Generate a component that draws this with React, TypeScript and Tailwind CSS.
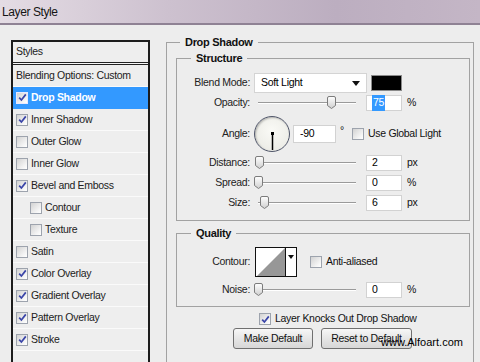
import React from 'react'

type StyleRow = { label: string; check: boolean | null; selected?: boolean; indent?: boolean }

const rows: StyleRow[] = [
  { label: 'Blending Options: Custom', check: null },
  { label: 'Drop Shadow', check: true, selected: true },
  { label: 'Inner Shadow', check: true },
  { label: 'Outer Glow', check: false },
  { label: 'Inner Glow', check: false },
  { label: 'Bevel and Emboss', check: true },
  { label: 'Contour', check: false, indent: true },
  { label: 'Texture', check: false, indent: true },
  { label: 'Satin', check: false },
  { label: 'Color Overlay', check: true },
  { label: 'Gradient Overlay', check: true },
  { label: 'Pattern Overlay', check: true },
  { label: 'Stroke', check: true },
  { label: '', check: null },
]

function Check({ checked, light }: { checked: boolean; light?: boolean }) {
  return (
    <span
      className={`flex h-[12px] w-[12px] shrink-0 items-center justify-center border ${
        light ? 'border-[#e8e8ff]' : 'border-[#9da3ad]'
      } bg-[linear-gradient(135deg,#d2d2d2,#f4f4f4_70%,#ffffff)]`}
    >
      {checked && (
        <svg width="9" height="9" viewBox="0 0 9 9">
          <path d="M1.2 4.6 L3.4 7 L7.8 1.4" fill="none" stroke="#3a45a8" strokeWidth="1.7" />
        </svg>
      )}
    </span>
  )
}

function Thumb() {
  return (
    <svg width="9" height="13" viewBox="0 0 9 13">
      <defs>
        <linearGradient id="tg" x1="0" y1="0" x2="0" y2="1">
          <stop offset="0" stopColor="#ffffff" />
          <stop offset="1" stopColor="#cfcfcf" />
        </linearGradient>
      </defs>
      <path
        d="M2 0.5 H7 Q8.5 0.5 8.5 2 V9.5 L4.5 12.5 L0.5 9.5 V2 Q0.5 0.5 2 0.5Z"
        fill="url(#tg)"
        stroke="#7c7c7c"
      />
    </svg>
  )
}

function Slider({ pos }: { pos: number }) {
  return (
    <div className="relative h-[16px] w-[106px]">
      <div className="absolute left-[4px] right-[4px] top-[7px] h-[2px] border-t border-[#9a9a9a] border-b border-b-white" />
      <div className="absolute top-[1px]" style={{ left: pos }}>
        <Thumb />
      </div>
    </div>
  )
}

function NumBox({ value, highlight }: { value: string; highlight?: boolean }) {
  return (
    <div className="flex h-[16px] w-[36px] items-center border border-[#d2d2d2] bg-white pl-[5px] text-black">
      {highlight ? <span className="bg-[#3399ff] px-[1px] text-white">{value}</span> : value}
    </div>
  )
}

function Label({ text }: { text: string }) {
  return <div className="w-[73px] shrink-0 text-right text-[#222]">{text}</div>
}

function SliderRow({ label, pos, value, unit, highlight, className = '' }: {
  label: string
  pos: number
  value: string
  unit: string
  highlight?: boolean
  className?: string
}) {
  return (
    <div className={`flex h-[16px] items-center ${className}`}>
      <Label text={label} />
      <div className="ml-[4px]">
        <Slider pos={pos} />
      </div>
      <div className="ml-[6px]">
        <NumBox value={value} highlight={highlight} />
      </div>
      <span className="ml-[5px]">{unit}</span>
    </div>
  )
}

export default function App() {
  return (
    <div className="relative h-[362px] w-[480px] overflow-hidden bg-[#ededed] font-['Liberation_Sans',Arial,sans-serif] text-[10.5px] tracking-[-0.3px] text-[#111]">
      {/* title bar */}
      <div className="flex h-[25px] items-center border-b-2 border-[#8f8294] bg-[linear-gradient(90deg,#e4dce4,#cdc1cf_35%,#bcaec0_70%,#c4b6c6)] pl-[2px] text-[12px] tracking-[-0.4px] text-[#151515]">
        Layer Style
      </div>

      <div className="flex h-[335px] items-start">
        {/* styles list */}
        <div className="ml-[11px] mt-[15px] h-[330px] w-[139px] shrink-0 border-2 border-b-0 border-[#1c1c1c] bg-[#eeeeee]">
          <div className="flex h-[20px] items-center pl-[3px] text-[#222]">Styles</div>
          <div className="h-[3px] border-y border-[#222] bg-[#f6f6f6]" />
          {rows.map((r, i) => (
            <div
              key={i}
              className={`flex h-[22px] items-center border-b ${
                r.selected
                  ? 'border-[#3399ff] bg-[#3399ff] font-bold text-white'
                  : 'border-[#fafafa] text-[#222]'
              } ${r.indent ? 'pl-[17px]' : 'pl-[3px]'}`}
            >
              {r.check !== null && (
                <span className="mr-[3px]">
                  <Check checked={r.check} light={r.selected} />
                </span>
              )}
              {r.label}
            </div>
          ))}
        </div>

        {/* drop shadow panel */}
        <fieldset className="ml-[16px] mt-[10px] h-[330px] w-[308px] shrink-0 border border-[#a2a2a2] pl-[9px] pr-[3px]">
          <legend className="ml-[4px] px-[5px] text-[11px] leading-[14px] font-bold text-[#111]">Drop Shadow</legend>

          <fieldset className="mt-[2px] w-[294px] border border-[#a2a2a2] pb-[9px]">
            <legend className="ml-[14px] px-[5px] text-[11px] leading-[14px] font-bold text-[#111]">Structure</legend>

            <div className="mt-[8px] flex h-[20px] items-center">
              <Label text="Blend Mode:" />
              <div className="ml-[4px] flex h-[20px] w-[113px] items-center justify-between border border-[#d4d4d4] bg-white pl-[6px] pr-[6px] text-black">
                <span>Soft Light</span>
                <svg width="8" height="5" viewBox="0 0 8 5">
                  <path d="M0 0 H8 L4 5Z" fill="#111" />
                </svg>
              </div>
              <div className="ml-[4px] h-[16px] w-[31px] border border-[#8a8a8a] bg-black" />
            </div>

            <SliderRow className="mt-[2px]" label="Opacity:" pos={73} value="75" unit="%" highlight />

            <div className="mt-[5px] flex h-[36px] items-center">
              <Label text="Angle:" />
              <div className="ml-[4px] flex h-[36px] w-[36px] items-start justify-center rounded-full border-[1.5px] border-[#50566a] bg-[radial-gradient(circle_at_50%_40%,#fafaf6,#e8e8e2)] shadow-[inset_1px_1px_2px_rgba(0,0,0,0.25)]">
                <svg width="33" height="33" viewBox="0 0 33 33">
                  <rect x="15" y="15" width="3" height="3" fill="#000" />
                  <line x1="16.5" y1="16.5" x2="16.5" y2="33" stroke="#000" strokeWidth="1.5" />
                </svg>
              </div>
              <div className="ml-[3px] flex h-[18px] w-[43px] items-center border border-[#d2d2d2] bg-white pl-[6px] text-black">
                -90
              </div>
              <span className="ml-[4px] w-[8px] -translate-y-[3px]">°</span>
              <span className="ml-[4px]">
                <Check checked={false} />
              </span>
              <span className="ml-[4px]">Use Global Light</span>
            </div>

            <SliderRow className="mt-[3px]" label="Distance:" pos={1} value="2" unit="px" />
            <SliderRow className="mt-[4px]" label="Spread:" pos={0} value="0" unit="%" />
            <SliderRow className="mt-[4px]" label="Size:" pos={6} value="6" unit="px" />
          </fieldset>

          <fieldset className="mt-[5px] w-[294px] border border-[#a2a2a2] pb-[8px]">
            <legend className="ml-[14px] px-[5px] text-[11px] leading-[14px] font-bold text-[#111]">Quality</legend>

            <div className="mt-[7px] flex h-[30px] items-center">
              <Label text="Contour:" />
              <div className="ml-[5px] flex h-[30px] w-[42px] border border-[#111] bg-white">
                <svg width="29" height="28" viewBox="0 0 29 28">
                  <path d="M1 28 L29 0 V28Z" fill="#979797" />
                </svg>
                <div className="flex flex-1 justify-center border-l border-[#111] pt-[7px]">
                  <svg width="6" height="4" viewBox="0 0 6 4">
                    <path d="M0 0 H6 L3 4Z" fill="#111" />
                  </svg>
                </div>
              </div>
              <span className="ml-[13px]">
                <Check checked={false} />
              </span>
              <span className="ml-[4px]">Anti-aliased</span>
            </div>

            <SliderRow className="mt-[5px]" label="Noise:" pos={0} value="0" unit="%" />
          </fieldset>

          <div className="ml-[83px] mt-[6px] flex h-[12px] items-center">
            <Check checked />
            <span className="ml-[4px]">Layer Knocks Out Drop Shadow</span>
          </div>

          <div className="mt-[3px] flex">
            <button className="ml-[57px] h-[21px] w-[80px] rounded-[3px] border border-[#707070] bg-[linear-gradient(180deg,#f7f7f7,#e6e6e6_50%,#d7d7d7)] text-[#111]">
              Make Default
            </button>
            <button className="ml-[8px] h-[21px] w-[91px] rounded-[3px] border border-[#707070] bg-[linear-gradient(180deg,#f7f7f7,#e6e6e6_50%,#d7d7d7)] text-[#111]">
              Reset to Default
            </button>
          </div>
        </fieldset>
      </div>

      {/* watermark */}
      <div className="absolute left-[381px] top-[334px] text-[11px] tracking-normal text-black">www.Alfoart.com</div>
    </div>
  )
}
